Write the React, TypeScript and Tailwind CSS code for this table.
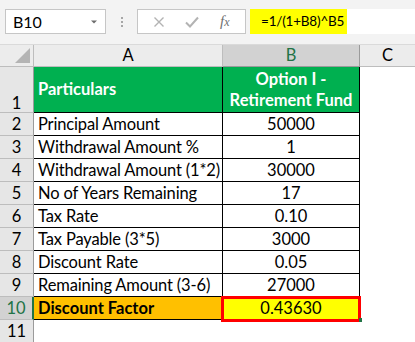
import { ChevronDown } from 'lucide-react';

type Row = {
  n: number;
  label: string;
  value: string;
};

const rows: Row[] = [
  { n: 2, label: 'Principal Amount', value: '50000' },
  { n: 3, label: 'Withdrawal Amount %', value: '1' },
  { n: 4, label: 'Withdrawal Amount (1*2)', value: '30000' },
  { n: 5, label: 'No of Years Remaining', value: '17' },
  { n: 6, label: 'Tax Rate', value: '0.10' },
  { n: 7, label: 'Tax Payable (3*5)', value: '3000' },
  { n: 8, label: 'Discount Rate', value: '0.05' },
  { n: 9, label: 'Remaining Amount (3-6)', value: '27000' },
];

function RowHead({ n, active = false, tall = false }: { n: number; active?: boolean; tall?: boolean }) {
  return (
    <div
      className={
        active
          ? 'flex w-[34px] shrink-0 items-center justify-center border-r-2 border-b border-r-[#217346] border-b-[#bdbdbd] bg-[#d2d2d2] text-[#217346]'
          : tall
            ? 'flex w-[34px] shrink-0 items-end justify-center border-r border-b border-r-[#9b9b9b] border-b-[#bdbdbd] bg-[#e6e6e6] pb-[1px] text-black'
            : 'flex w-[34px] shrink-0 items-center justify-center border-r border-b border-r-[#9b9b9b] border-b-[#bdbdbd] bg-[#e6e6e6] text-black'
      }
    >
      {n}
    </div>
  );
}

export default function App() {
  return (
    <div className="h-[342px] w-[415px] overflow-hidden bg-white text-[16.5px] leading-none text-black [font-family:Lato,'Liberation_Sans',sans-serif]">
      {/* Formula bar */}
      <div className="flex h-[44px] items-start bg-[#f3f3f3] pt-[9px]">
        <div className="ml-[5px] flex h-[25px] w-[101px] items-center justify-between border border-[#c6c6c6] bg-white pl-[7px] pr-[5px]">
          <span className="text-[16px]">B10</span>
          <ChevronDown className="h-3 w-3 fill-[#6d6d6d] text-[#6d6d6d]" strokeWidth={0} />
        </div>
        <div className="flex h-[25px] w-[31px] flex-col items-center justify-center gap-[2px]">
          <span className="h-[2px] w-[2px] bg-[#a6a6a6]" />
          <span className="h-[2px] w-[2px] bg-[#a6a6a6]" />
          <span className="h-[2px] w-[2px] bg-[#a6a6a6]" />
        </div>
        <div className="flex h-[25px] w-[109px] items-center border border-[#c6c6c6] bg-white">
          <svg className="ml-[15px]" width="12" height="12" viewBox="0 0 12 12">
            <path d="M1.5 1.5 L10.5 10.5 M10.5 1.5 L1.5 10.5" stroke="#b3b3b3" strokeWidth="1.4" />
          </svg>
          <svg className="ml-[20px]" width="14" height="12" viewBox="0 0 14 12">
            <path d="M1 6.5 L5 10.5 L13 1.5" stroke="#b3b3b3" strokeWidth="2" fill="none" />
          </svg>
          <span className="ml-[21px] text-[15px] italic text-[#707070] [font-family:'Liberation_Serif',serif]">
            f<span className="text-[12px]">x</span>
          </span>
        </div>
        <div className="ml-[4px] flex h-[25px] flex-1 items-center bg-white">
          <div className="flex h-full w-[97px] shrink-0 items-center whitespace-nowrap bg-[#ffff00] pl-[11px] text-[13.5px] tracking-[-0.2px]">
            =1/(1+B8)^B5
          </div>
        </div>
      </div>

      {/* Column headers */}
      <div className="flex h-[23px] border-t border-[#dadada] bg-[#ececec]">
        <div className="relative w-[34px] shrink-0 border-r border-b border-[#bdbdbd]">
          <div className="absolute bottom-[3px] right-[3px] h-0 w-0 border-b-[15px] border-l-[15px] border-b-[#b4b4b4] border-l-transparent" />
        </div>
        <div className="flex w-[189px] shrink-0 items-center justify-center border-r border-b border-[#bdbdbd]">A</div>
        <div className="flex w-[137px] shrink-0 items-center justify-center border-r border-b border-[#9b9b9b] bg-[#d2d2d2] text-[#217346]">
          B
        </div>
        <div className="flex flex-1 items-center justify-center border-b border-[#bdbdbd]">C</div>
      </div>

      {/* Header row */}
      <div className="flex h-[46px]">
        <RowHead n={1} tall />
        <div className="flex w-[189px] shrink-0 items-center border-r border-b border-black bg-[#00b050] pl-[4px] font-bold text-white">
          Particulars
        </div>
        <div className="flex w-[137px] shrink-0 flex-col items-center justify-center gap-[5px] border-r border-b border-black bg-[#00b050] font-bold text-white">
          <span>Option I -</span>
          <span>Retirement Fund</span>
        </div>
        <div className="flex-1" />
      </div>

      {rows.map((r) => (
        <div key={r.n} className="flex h-[23px]">
          <RowHead n={r.n} />
          <div className="flex w-[189px] shrink-0 items-center whitespace-nowrap border-r border-b border-black pl-[4px] tracking-[-0.15px]">
            {r.label}
          </div>
          <div className="flex w-[137px] shrink-0 items-center justify-center border-r border-b border-black">{r.value}</div>
          <div className="flex-1" />
        </div>
      ))}

      {/* Result row */}
      <div className="flex h-[23px]">
        <RowHead n={10} active />
        <div className="flex w-[189px] shrink-0 items-center border-r border-b border-black bg-[#ffc000] pl-[4px] font-bold">
          Discount Factor
        </div>
        <div className="relative flex w-[137px] shrink-0 items-center justify-center border-r border-b border-black bg-[#ffff00]">
          0.43630
          <div className="absolute -left-[2px] -right-[2px] -top-[1px] -bottom-[3px] border-[3px] border-[#ff0000]" />
          <div className="absolute -bottom-[3px] -right-[3px] h-[4px] w-[3px] bg-[#217346]" />
        </div>
        <div className="flex-1" />
      </div>

      <div className="flex h-[23px]">
        <RowHead n={11} />
        <div className="flex-1" />
      </div>
    </div>
  );
}
